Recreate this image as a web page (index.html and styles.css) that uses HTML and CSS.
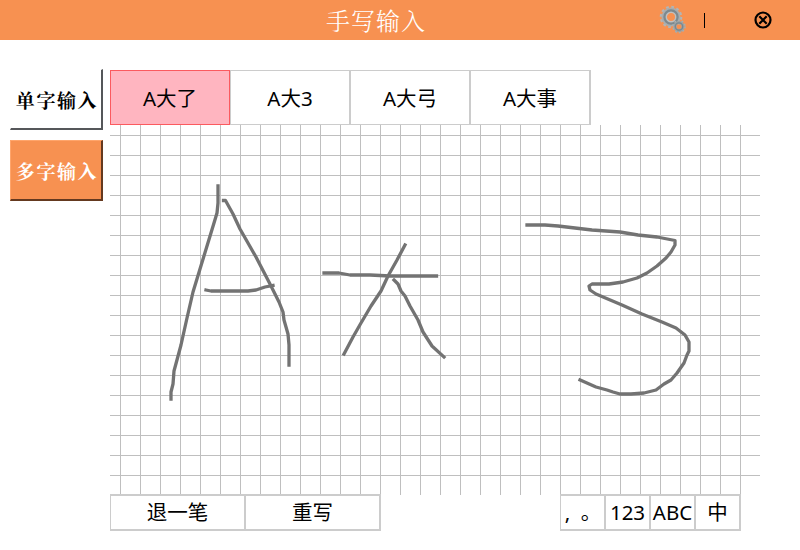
FILE: index.html
```html
<!DOCTYPE html>
<html lang="zh-CN">
<head>
<meta charset="utf-8">
<title>手写输入</title>
<link rel="stylesheet" href="styles.css">
</head>
<body>
<header class="titlebar">
  <h1 class="title">手写输入</h1>
  <svg class="gears" viewBox="0 0 28 30">
    <g fill="none">
      <circle cx="12" cy="12" r="10" stroke="#b3b5b5" stroke-width="2.6" stroke-dasharray="2.7 2.536"/>
      <circle cx="12" cy="12" r="7" stroke="#a9adae" stroke-width="5"/>
      <circle cx="12" cy="12" r="6.6" stroke="#7d898e" stroke-width="2.2"/>
      <circle cx="12" cy="12" r="4.6" stroke="#c0c1c0" stroke-width="1.2"/>
      <circle cx="20" cy="21.5" r="5.8" stroke="#a9afb0" stroke-width="2" stroke-dasharray="1.8 1.844"/>
      <circle cx="20" cy="21.5" r="4" stroke="#9ba2a4" stroke-width="3"/>
      <circle cx="20" cy="21.5" r="3.7" stroke="#7a878d" stroke-width="1.3"/>
    </g>
  </svg>
  <span class="divider"></span>
  <svg class="close" viewBox="0 0 18 18">
    <circle cx="9" cy="9" r="7.5"/>
    <path d="M5.3 5.3 12.7 12.7M12.7 5.3 5.3 12.7"/>
  </svg>
</header>
<main class="workspace">
  <nav class="modes">
    <button class="mode">单字输入</button>
    <button class="mode selected">多字输入</button>
  </nav>
  <section class="pad">
    <div class="candidates">
      <button class="candidate active">A大了</button>
      <button class="candidate">A大3</button>
      <button class="candidate">A大弓</button>
      <button class="candidate">A大事</button>
    </div>
    <svg class="canvas" viewBox="110 125 650 370">
      <path d="M218 186V203L217 213 214 223 207 246 200 269 193 292 187 318 181 345 174 371 173 384 171 392V399"/>
      <path d="M223.500 200.500H225.500L233 214 240 229 256 257 270 284 279 302 283 312 284 320 288 334 289 345V365"/>
      <path d="M206 290 211 291H248L256 290 265 287 273 285.500"/>
      <path d="M324 273H339L350 275 370 275 390 276H436.500"/>
      <path d="M405 245 397 260 388 276 381 291 371 306 361 323 353 337 344 354"/>
      <path d="M394 280 398 284 401 291 405 296 410 306 418 320 423 332 432 346 444 357"/>
      <path d="M527 225H545L558 226 575 228 592 230 620 232 638 235 657 237 675 240.500V245L671 252 666 258 657 266 647 273 637 278 623 282 609 284H592L589 286 590 290 596 294 622 305 642 314 662 322 676 328 685 335 689 342V351L687 355 684 363 677 373 671 380 664 384 656 390 644 393 631 394 620 394 613 392 607 390 596 387 580 380"/>
    </svg>
    <div class="toolbar">
      <div class="group">
        <button class="tool">退一笔</button>
        <button class="tool">重写</button>
      </div>
      <div class="group">
        <button class="key punctuation">,&nbsp; 。</button>
        <button class="key">123</button>
        <button class="key">ABC</button>
        <button class="key">中</button>
      </div>
    </div>
  </section>
</main>
</body>
</html>
```

FILE: styles.css
```css
* { box-sizing: border-box; }

body {
  margin: 0;
  width: 800px;
  height: 550px;
  overflow: hidden;
  background: #fff;
  color: #000;
  font-family: "Noto Sans", "Noto Sans CJK SC", sans-serif;
}

button {
  margin: 0;
  padding: 0;
  border: 0;
  background: #fff;
  color: inherit;
  font: inherit;
  white-space: nowrap;
}

.titlebar {
  display: grid;
  grid-template-columns: 326px 100px 233px 28px 17px 1px 49px 18px;
  align-items: center;
  height: 40px;
  background: #f79151;
}

.title {
  grid-column: 2;
  margin: 0;
  color: #fff;
  font: 300 24px/40px "Noto Serif CJK SC", "Noto Sans CJK SC", serif;
  letter-spacing: 1px;
  white-space: nowrap;
}

.gears { grid-column: 4; width: 28px; height: 30px; }
.divider { grid-column: 6; height: 15px; background: #000; }
.close { grid-column: 8; width: 18px; height: 18px; }
.close circle, .close path { fill: none; stroke: #000; stroke-width: 2.2; }

.workspace { display: flex; padding: 29px 40px 0 10px; }

.modes {
  display: flex;
  flex-direction: column;
  gap: 10px;
  width: 100px;
}

.mode {
  width: 93px;
  height: 61px;
  border: solid #fff;
  border-width: 1px 2px 2px 1px;
  border-right-color: #55575a;
  border-bottom-color: #55575a;
  font: 700 19px/1 "Noto Serif CJK SC", "Noto Sans CJK SC", serif;
  letter-spacing: 1.6px;
  text-indent: 2px;
}

.mode.selected {
  background: #f79151;
  border-color: #ffa56b #64391f #64391f #ffa56b;
  color: #fff;
}

.pad { width: 650px; padding-top: 1px; }
.candidates { display: flex; }

.candidate {
  width: 120px;
  height: 55px;
  padding-bottom: 2px;
  border: 1px solid #ccc;
  box-shadow: 1px 0 #ccc;
  font-size: 20.5px;
}

.candidate.active {
  background: #ffb5c0;
  border-color: #fb5a5f;
}

.canvas {
  display: block;
  width: 650px;
  height: 370px;
  background-image:
    linear-gradient(90deg, #bfbfbf 1px, transparent 1px),
    linear-gradient(#bfbfbf 1px, transparent 1px);
  background-size: 20px 20px;
  background-position: 10px 10px;
}

.canvas path {
  fill: none;
  stroke: #737373;
  stroke-width: 3.3;
  stroke-linecap: square;
  stroke-linejoin: round;
}

.toolbar {
  position: relative;
  display: flex;
  justify-content: space-between;
  width: 630px;
  margin-top: -1px;
}

.group { display: flex; }

.tool, .key {
  height: 37px;
  border: solid #ccc;
  border-width: 2px 1px;
  box-shadow: 1px 0 #ccc;
  font-size: 20.5px;
  line-height: 33px;
}

.tool { width: 135px; }
.key { width: 45px; }
.punctuation { padding-left: 1px; }
```
